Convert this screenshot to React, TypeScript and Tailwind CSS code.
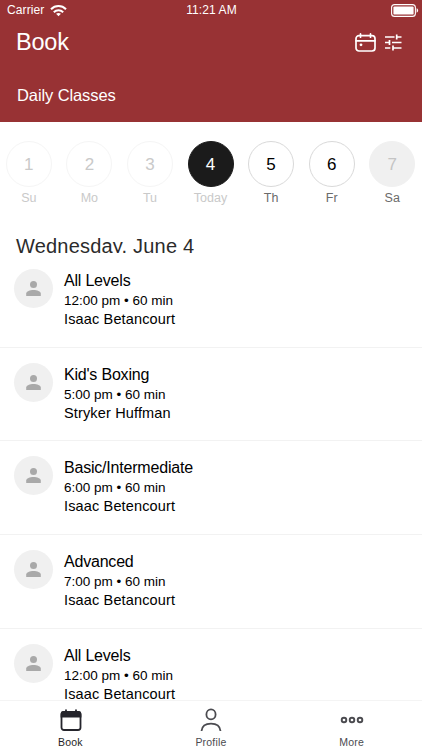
import clsx from "clsx";

const days = [
  { date: 1, label: "Su", state: "past" },
  { date: 2, label: "Mo", state: "past" },
  { date: 3, label: "Tu", state: "past" },
  { date: 4, label: "Today", state: "selected" },
  { date: 5, label: "Th", state: "open" },
  { date: 6, label: "Fr", state: "open" },
  { date: 7, label: "Sa", state: "closed" },
];

const classes = [
  { title: "All Levels", time: "12:00 pm", coach: "Isaac Betancourt" },
  { title: "Kid's Boxing", time: "5:00 pm", coach: "Stryker Huffman" },
  { title: "Basic/Intermediate", time: "6:00 pm", coach: "Isaac Betencourt" },
  { title: "Advanced", time: "7:00 pm", coach: "Isaac Betancourt" },
  { title: "All Levels", time: "12:00 pm", coach: "Isaac Betancourt" },
];

function StatusBar() {
  return (
    <div className="grid h-5 grid-cols-3 items-center pl-[7px] pr-[3px] text-[12px]">
      <div className="flex items-center gap-[6px]">
        <span className="tracking-[0.1px]">Carrier</span>
        <svg width="17" height="13" viewBox="0 0 17 13" fill="none" stroke="white" strokeWidth="2">
          <path d="M1 5.2C5.2 1 11.8 1 16 5.2" />
          <path d="M3.8 8.2C6.5 5.6 10.5 5.6 13.2 8.2" />
          <path d="M8.5 12.2L6.1 9.8C7.5 8.6 9.5 8.6 10.9 9.8Z" fill="white" stroke="none" />
        </svg>
      </div>
      <span className="pr-[3px] text-center tracking-[0.1px]">11:21 AM</span>
      <svg className="justify-self-end" width="28" height="13" viewBox="0 0 28 13" fill="none">
        <rect x="0.6" y="0.6" width="23.8" height="11.8" rx="3" stroke="white" strokeWidth="1.1" />
        <rect x="2.4" y="2.4" width="20.2" height="8.2" rx="1.2" fill="white" />
        <path d="M25.6 4.3C27.6 5 27.6 8 25.6 8.7Z" fill="white" />
      </svg>
    </div>
  );
}

function Header() {
  return (
    <header className="h-[122px] shrink-0 bg-[#983234] text-white">
      <StatusBar />
      <div className="flex h-[45px] items-center justify-between pl-4 pr-[19px]">
        <h1 className="text-[23.5px] leading-[45px] tracking-[-0.2px]">Book</h1>
        <div className="flex items-center gap-[9px]">
          <svg width="21" height="19" viewBox="0 0 21 19" fill="none" stroke="white" strokeWidth="1.7" strokeLinecap="round">
            <rect x="1" y="2.6" width="19" height="15.4" rx="3" />
            <path d="M1 7.8H20M5.5 0.9V4.2M15.5 0.9V4.2" />
            <circle cx="6" cy="11.8" r="1.4" fill="white" stroke="none" />
          </svg>
          <svg width="18" height="17" viewBox="0 0 18 17" fill="none" stroke="white" strokeWidth="1.7">
            <path d="M0 3H9.5M11.7 0.5V5.5M11.7 3H16.5" />
            <path d="M0 8.5H4.5M4.5 6V11M7 8.5H16.5" />
            <path d="M0 14H5.3M8 11.5V16.5M8 14H16.5" />
          </svg>
        </div>
      </div>
      <h2 className="pl-[17px] text-[16.5px] leading-[61px] tracking-[-0.1px]">Daily Classes</h2>
    </header>
  );
}

function DayPicker() {
  return (
    <div className="-ml-[1.5px] -mr-[0.5px] flex h-[110px] shrink-0 pt-[19px]">
      {days.map((day) => (
        <div key={day.date} className="flex flex-1 flex-col items-center">
          <div
            className={clsx(
              "flex size-[46px] items-center justify-center rounded-full border pt-px text-[17px]",
              day.state === "past" && "border-[#f5f5f5] text-[#c9c9c9]",
              day.state === "selected" && "border-[#1b1b1b] bg-[#1b1b1b] text-white",
              day.state === "open" && "border-[#d9d9d9] text-black",
              day.state === "closed" && "border-[#f0f0f0] bg-[#f0f0f0] text-[#c4c4c4]",
            )}
          >
            {day.date}
          </div>
          <span
            className={clsx(
              "mt-[2px] text-[12.5px] leading-[18px]",
              day.state === "past" || day.state === "selected" ? "text-[#c9c9c9]" : "text-[#6b6b6b]",
            )}
          >
            {day.label}
          </span>
        </div>
      ))}
    </div>
  );
}

function Avatar() {
  return (
    <div className="flex size-[39px] items-center justify-center rounded-full bg-[#f0f0f0]">
      <svg width="15" height="15" viewBox="0 0 15 15" fill="#a9a9a9">
        <circle cx="7.5" cy="3.6" r="3.5" />
        <path d="M0.2 15V12.6C0.2 10.2 4 9 7.5 9S14.8 10.2 14.8 12.6V15Z" />
      </svg>
    </div>
  );
}

function ClassList() {
  return (
    <ul>
      {classes.map((item, i) => (
        <li key={i} className="flex h-[93.7px] gap-[11.4px] border-b border-[#f2f2f2] pl-[13.6px] pt-[15px]">
          <Avatar />
          <div className="pt-px text-black">
            <h4 className="text-[16px] leading-[22px] tracking-[-0.2px]">{item.title}</h4>
            <p className="-mt-px text-[13.5px] leading-[19px]">{item.time} • 60 min</p>
            <p className="text-[14.5px] leading-[19px] tracking-[0.15px]">{item.coach}</p>
          </div>
        </li>
      ))}
    </ul>
  );
}

function TabBar() {
  return (
    <nav className="grid h-[50px] shrink-0 grid-cols-3 border-t border-[#f4f4f4] bg-white text-[10.5px] leading-3 tracking-[0.2px] text-[#4b4b50]">
      <div className="flex flex-col items-center pt-[7px] text-[#1f1f25]">
        <svg className="ml-[2px]" width="22" height="23" viewBox="0 0 22 23" fill="none" stroke="#25252c" strokeWidth="1.8" strokeLinecap="round">
          <rect x="1.5" y="4" width="19" height="18" rx="2.5" />
          <path d="M1.5 8.5V6.5Q1.5 4 4 4H18Q20.5 4 20.5 6.5V8.5Z" fill="#25252c" />
          <path d="M6 2.2V4M16 2.2V4" />
        </svg>
        <span className="mt-[5px]">Book</span>
      </div>
      <div className="flex flex-col items-center pt-[7px]">
        <svg width="22" height="24" viewBox="0 0 22 24" fill="none" stroke="#4b4b50" strokeWidth="1.8">
          <ellipse cx="11" cy="6.4" rx="4.6" ry="5" />
          <path d="M1.5 23C2 18.4 5.2 15.7 11 15.7S20 18.4 20.5 23" />
        </svg>
        <span className="mt-[4px]">Profile</span>
      </div>
      <div className="flex flex-col items-center pt-[15px]">
        <svg width="24" height="8" viewBox="0 0 24 8" fill="none" stroke="#4b4b50" strokeWidth="1.9">
          <circle cx="4" cy="4" r="2.3" />
          <circle cx="12" cy="4" r="2.3" />
          <circle cx="20" cy="4" r="2.3" />
        </svg>
        <span className="mt-[12px]">More</span>
      </div>
    </nav>
  );
}

export default function App() {
  return (
    <div className="flex h-[750px] w-[422px] flex-col overflow-hidden bg-white font-['Liberation_Sans',Arial,sans-serif]">
      <Header />
      <DayPicker />
      <h3 className="mb-px h-[21px] shrink-0 overflow-hidden pl-4 text-[20px] leading-[29px] tracking-[0.2px] text-[#2b2b2b]">
        Wednesday, June 4
      </h3>
      <main className="min-h-0 flex-1 overflow-hidden">
        <ClassList />
      </main>
      <TabBar />
    </div>
  );
}
